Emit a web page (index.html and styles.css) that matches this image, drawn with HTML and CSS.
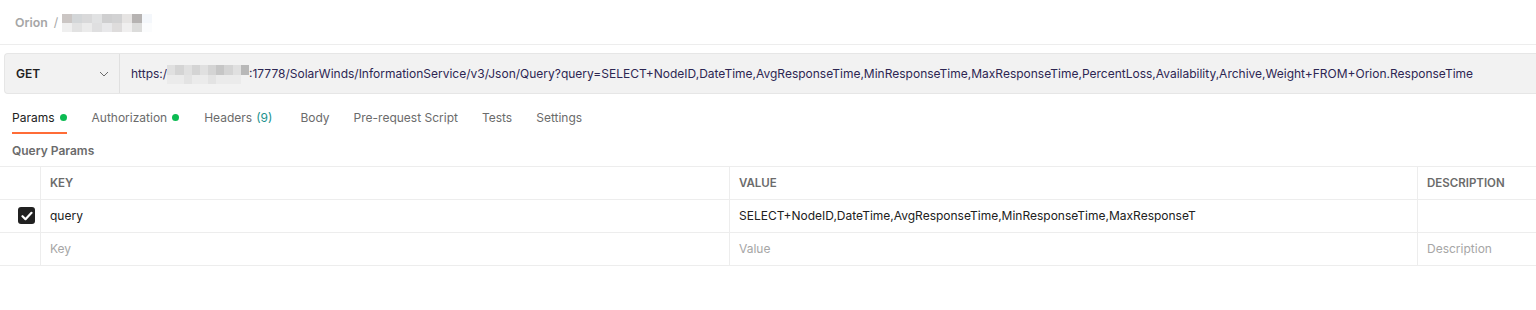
FILE: index.html
```html
<!DOCTYPE html>
<html lang="en">
<head>
    <meta charset="UTF-8">
    <title>Orion request</title>
    <link rel="stylesheet" href="styles.css">
</head>
<body>
    <div class="crumbs">
        <span class="crumb">Orion</span>
        <span class="sep">/</span>
        <span class="blur blur-name"><i></i><i></i><i></i><i></i><i></i><i></i><i></i><i></i><i></i><i></i><i></i><i></i><i></i><i></i><i></i><i></i><i></i><i></i></span>
    </div>

    <div class="reqbar">
        <div class="method">
            <b>GET</b>
            <svg width="10" height="6" viewBox="0 0 10 6"><path d="M1 1l4 4 4-4" fill="none" stroke="#6b6b6b" stroke-width="1"/></svg>
        </div>
        <div class="url">https:/<span class="blur blur-host"><i></i><i></i><i></i><i></i><i></i><i></i><i></i><i></i><i></i><i></i><i></i><i></i><i></i><i></i><i></i><i></i><i></i><i></i><i></i><i></i></span>:17778/SolarWinds/InformationService/v3/Json/Query?query=SELECT+NodeID,DateTime,AvgResponseTime,MinResponseTime,MaxResponseTime,PercentLoss,Availability,Archive,Weight+FROM+Orion.ResponseTime</div>
    </div>

    <div class="tabs">
        <span class="tab active">Params <em class="dot"></em></span>
        <span class="tab">Authorization <em class="dot"></em></span>
        <span class="tab wide">Headers <span class="count">(9)</span></span>
        <span class="tab">Body</span>
        <span class="tab">Pre-request Script</span>
        <span class="tab">Tests</span>
        <span class="tab">Settings</span>
    </div>

    <div class="section-title">Query Params</div>

    <div class="params">
        <div class="cell check"></div>
        <div class="cell head">KEY</div>
        <div class="cell head">VALUE</div>
        <div class="cell head">DESCRIPTION</div>

        <div class="cell check">
            <span class="box"><svg width="12" height="10" viewBox="0 0 12 10"><path d="M1.5 5.2l3 3 6-6.4" fill="none" stroke="#fff" stroke-width="2.2" stroke-linecap="round" stroke-linejoin="round"/></svg></span>
        </div>
        <div class="cell">query</div>
        <div class="cell">SELECT+NodeID,DateTime,AvgResponseTime,MinResponseTime,MaxResponseT</div>
        <div class="cell"></div>

        <div class="cell check"></div>
        <div class="cell hint">Key</div>
        <div class="cell hint">Value</div>
        <div class="cell hint">Description</div>
    </div>
</body>
</html>
```

FILE: styles.css
```css
body { margin: 0; font-family: Inter, "Noto Sans", sans-serif; font-size: 12px; color: #212121; background: #fff; overflow: hidden; }

.crumbs { height: 45px; display: flex; align-items: center; padding-left: 15px; border-bottom: 1px solid #ededed; box-sizing: border-box; color: #a6a6a6; font-weight: 600; font-size: 12.3px; }
.sep { margin: 0 4px 0 6px; font-weight: 400; }

.blur { display: inline-grid; vertical-align: middle; }
.blur i { display: block; }
.blur-name { grid-template-columns: repeat(9, 10px); grid-template-rows: 9px 9px; margin-top: 1px; }
.blur-name i:nth-child(1) { background: #cbc6c4; }
.blur-name i:nth-child(2) { background: #d3d6d8; }
.blur-name i:nth-child(3) { background: #d9d9da; }
.blur-name i:nth-child(4) { background: #e1e2e3; }
.blur-name i:nth-child(5) { background: #cfcfd0; }
.blur-name i:nth-child(6) { background: #d2d2d3; }
.blur-name i:nth-child(7) { background: #e6e4e3; }
.blur-name i:nth-child(8) { background: #b6b3b2; }
.blur-name i:nth-child(9) { background: #f4f7fb; }
.blur-name i:nth-child(10) { background: #efefef; }
.blur-name i:nth-child(11) { background: #e2e2e2; }
.blur-name i:nth-child(12) { background: #ebebeb; }
.blur-name i:nth-child(13) { background: #dfdfe0; }
.blur-name i:nth-child(14) { background: #e8e8ea; }
.blur-name i:nth-child(15) { background: #dedcdc; }
.blur-name i:nth-child(16) { background: #f0efef; }
.blur-name i:nth-child(17) { background: #dcdcdb; }
.blur-name i:nth-child(18) { background: #fbfcfd; }

.reqbar { display: flex; height: 41px; margin: 8px 0 0 4px; background: #f2f2f2; border: 1px solid #e6e6e6; border-right: 0; border-radius: 4px 0 0 4px; box-sizing: border-box; }
.method { width: 115px; flex: none; display: flex; align-items: center; justify-content: space-between; padding: 0 10px 0 11px; border-right: 1px solid #e0e0e0; box-sizing: border-box; font-size: 12px; }
.method b { font-weight: 600; }
.url { display: flex; align-items: center; padding-left: 11px; white-space: nowrap; color: #2d2652; }
.blur-host { grid-template-columns: repeat(10, 8.2px); grid-template-rows: 10px 9px; margin-top: 1px; }
.blur-host i { background: #e0e0e0; }
.blur-host i:nth-child(2n) { background: #d4d4d4; }
.blur-host i:nth-child(7) { background: #c6c6c6; }
.blur-host i:nth-child(10) { background: #b8b8b8; }
.blur-host i:nth-child(n+11) { background: #ebebeb; }
.blur-host i:nth-child(13), .blur-host i:nth-child(16) { background: #e3e3e3; }
.blur-host i:nth-child(20) { background: #f2f2f2; }

.tabs { display: flex; height: 40px; padding-left: 12px; box-sizing: border-box; }
.tab { display: flex; align-items: center; height: 40px; margin-right: 24px; padding-top: 8px; color: #6b6b6b; font-size: 12px; border-bottom: 2px solid transparent; box-sizing: border-box; }
.tab:first-child, .tab:nth-child(2) { margin-right: 25px; }
.tab.wide { margin-right: 28px; }
.tab.active { color: #212121; border-bottom-color: #ff6c37; }
.dot { display: inline-block; width: 7px; height: 7px; border-radius: 50%; background: #0cbb52; margin-left: 5px; }
.count { color: #20918d; margin-left: 4px; }

.section-title { height: 32px; display: flex; align-items: center; padding-left: 12px; color: #6b6b6b; font-weight: 600; font-size: 12px; }

.params { display: grid; grid-template-columns: 40px 689px 688px 1fr; border-top: 1px solid #ededed; }
.cell { height: 33px; display: flex; align-items: center; padding: 0 0 1px 9px; border-bottom: 1px solid #ededed; border-left: 1px solid #ededed; box-sizing: border-box; white-space: nowrap; overflow: hidden; }
.cell.check { border-left: 0; padding-left: 18px; }
.head { font-weight: 600; font-size: 11.5px; color: #6b6b6b; }
.hint { color: #a6a6a6; }
.box { width: 17px; height: 17px; border-radius: 3px; background: #212121; display: flex; align-items: center; justify-content: center; }
```
